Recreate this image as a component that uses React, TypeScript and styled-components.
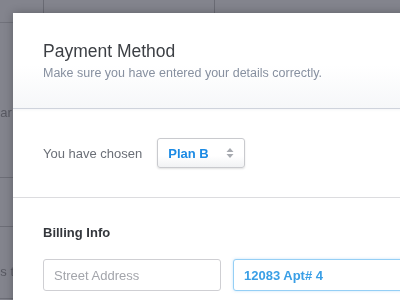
import { createGlobalStyle } from 'styled-components';
import styled from 'styled-components';

const GlobalStyle = createGlobalStyle`
  html, body {
    margin: 0;
    padding: 0;
    width: 400px;
    height: 300px;
    overflow: hidden;
    font-family: "Liberation Sans", Arial, sans-serif;
  }
`;

// background page, dimmed by the overlay
const Page = styled.div`
  position: fixed;
  inset: 0;
  background: #fff;
  font-size: 13px;
  line-height: 16px;
  color: #a2a2a2;
`;

const PageHead = styled.div`
  display: flex;
  height: 22px;
  border-bottom: 1px solid #d8d8d8;
`;

const HeadCell = styled.div<{ $w: number }>`
  width: ${(p) => p.$w}px;
  flex: none;
  border-right: 1px solid #c9c9c9;
`;

const PageRow = styled.div<{ $h: number; $pad?: number }>`
  box-sizing: border-box;
  height: ${(p) => p.$h}px;
  padding-top: ${(p) => p.$pad ?? 0}px;
  border-bottom: 1px solid #d0d0d0;
`;

const RowText = styled.span<{ $shift: number }>`
  display: block;
  margin-left: -${(p) => p.$shift}px;
  white-space: nowrap;
`;

const Overlay = styled.div`
  position: fixed;
  inset: 0;
  background: rgba(25, 28, 45, 0.54);
`;

const Modal = styled.div`
  position: absolute;
  left: 13px;
  top: 13px;
  width: 440px;
  height: 340px;
  background: #fff;
  border-radius: 3px 0 0 0;
  box-shadow: 0 0 10px rgba(0, 0, 0, 0.28);
`;

const Header = styled.div`
  padding: 28px 30px 27px 30px;
  background: linear-gradient(to bottom, #ffffff 55%, #f6f7f9 100%);
  border-bottom: 1px solid #cfd3dc;
  box-shadow: 0 1px 2px rgba(120, 130, 150, 0.08);
`;

const Title = styled.h1`
  margin: 0 0 4px 0;
  font-size: 17.5px;
  line-height: 20px;
  font-weight: normal;
  color: #3c3f44;
`;

const Subtitle = styled.p`
  margin: 0;
  font-size: 12.5px;
  line-height: 16px;
  color: #8790a0;
`;

const Section = styled.div<{ $divider?: boolean }>`
  padding: ${(p) => (p.$divider ? '27px 30px 0 30px' : '29px 30px 29px 30px')};
  border-top: ${(p) => (p.$divider ? '1px solid #dcdcdf' : 'none')};
`;

const ChoiceRow = styled.div`
  display: flex;
  align-items: center;
  gap: 15px;
`;

const Label = styled.span`
  font-size: 13px;
  color: #6b6f77;
`;

const SelectBox = styled.div`
  box-sizing: border-box;
  width: 88px;
  height: 30px;
  padding: 0 10px 0 10px;
  display: flex;
  align-items: center;
  justify-content: space-between;
  border: 1px solid #c9cace;
  border-radius: 3px;
  background: linear-gradient(to bottom, #ffffff 0%, #ffffff 60%, #f1f2f4 100%);
  box-shadow: 0 1px 2px rgba(0, 0, 0, 0.12);
  font-size: 13px;
  font-weight: bold;
  color: #1b8ae4;
`;

const SectionTitle = styled.h2`
  margin: 0 0 18px 0;
  font-size: 13px;
  line-height: 16px;
  font-weight: bold;
  color: #34373c;
`;

const FieldRow = styled.div`
  display: flex;
  gap: 12px;
`;

const Field = styled.input<{ $active?: boolean }>`
  box-sizing: border-box;
  flex: none;
  width: 178px;
  height: 32px;
  padding: 0 10px;
  border-radius: 3px;
  border: 1px solid ${(p) => (p.$active ? '#95cff5' : '#cfcfd3')};
  box-shadow: ${(p) => (p.$active ? '0 0 3px rgba(90, 175, 240, 0.35)' : 'none')};
  font-family: "Liberation Sans", Arial, sans-serif;
  font-size: 13px;
  font-weight: ${(p) => (p.$active ? 'bold' : 'normal')};
  color: #3a9fe6;
  outline: none;
  &::placeholder {
    color: #a3a5ab;
  }
`;

const Arrows = () => (
  <svg width="8" height="12" viewBox="0 0 8 12">
    <path d="M4 1 L7.5 5 L0.5 5 Z" fill="#a7aab0" />
    <path d="M4 11 L7.5 7 L0.5 7 Z" fill="#a7aab0" />
  </svg>
);

export default function App() {
  return (
    <>
      <GlobalStyle />
      <Page>
        <PageHead>
          <HeadCell $w={43} />
          <HeadCell $w={170} />
          <HeadCell $w={186} />
        </PageHead>
        <PageRow $h={155} $pad={82}>
          <RowText $shift={41}>Calendar</RowText>
        </PageRow>
        <PageRow $h={49} />
        <PageRow $h={72} $pad={37}>
          <RowText $shift={25}>Items to review</RowText>
        </PageRow>
      </Page>
      <Overlay />
      <Modal>
        <Header>
          <Title>Payment Method</Title>
          <Subtitle>Make sure you have entered your details correctly.</Subtitle>
        </Header>
        <Section>
          <ChoiceRow>
            <Label>You have chosen</Label>
            <SelectBox>
              Plan B
              <Arrows />
            </SelectBox>
          </ChoiceRow>
        </Section>
        <Section $divider>
          <SectionTitle>Billing Info</SectionTitle>
          <FieldRow>
            <Field placeholder="Street Address" readOnly />
            <Field $active value="12083 Apt# 4" readOnly />
          </FieldRow>
        </Section>
      </Modal>
    </>
  );
}
